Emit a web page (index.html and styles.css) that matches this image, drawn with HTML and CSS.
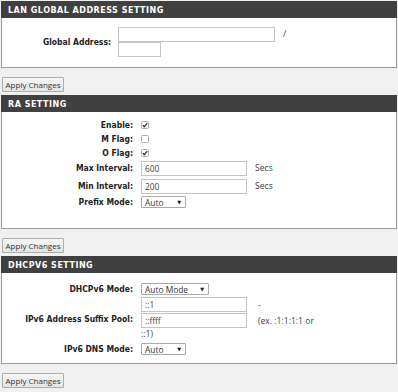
FILE: index.html
```html
<!DOCTYPE html>
<html lang="en">
<head>
<meta charset="utf-8">
<title>IPv6 LAN Settings</title>
<link rel="stylesheet" href="styles.css">
</head>
<body>
<div class="page">
  <section class="panel">
    <div class="panel-head">LAN GLOBAL ADDRESS SETTING</div>
    <div class="panel-body body-lan">
      <div class="row row-lan">
        <div class="label">Global Address:</div>
        <div class="value stack">
          <div class="line"><input class="field w-addr" type="text" value=""><span class="note note-slash">/</span></div>
          <div class="line"><input class="field w-prefix" type="text" value=""></div>
        </div>
      </div>
    </div>
  </section>
  <div class="actions"><button class="btn" type="button">Apply Changes</button></div>

  <section class="panel">
    <div class="panel-head">RA SETTING</div>
    <div class="panel-body body-ra">
      <div class="row row-cb h14">
        <div class="label">Enable:</div>
        <div class="value"><svg class="cb" width="8" height="8" viewBox="0 0 8 8"><rect x="0.5" y="0.5" width="7" height="7" rx="1" fill="#fff" stroke="#b0b0b0"/><path d="M1.8 4.2 L3.3 5.7 L6.3 2.2" fill="none" stroke="#333" stroke-width="1.3"/></svg></div>
      </div>
      <div class="row row-cb h14">
        <div class="label">M Flag:</div>
        <div class="value"><svg class="cb" width="8" height="8" viewBox="0 0 8 8"><rect x="0.5" y="0.5" width="7" height="7" rx="1" fill="#fff" stroke="#b0b0b0"/></svg></div>
      </div>
      <div class="row row-cb h13">
        <div class="label">O Flag:</div>
        <div class="value"><svg class="cb" width="8" height="8" viewBox="0 0 8 8"><rect x="0.5" y="0.5" width="7" height="7" rx="1" fill="#fff" stroke="#b0b0b0"/><path d="M1.8 4.2 L3.3 5.7 L6.3 2.2" fill="none" stroke="#333" stroke-width="1.3"/></svg></div>
      </div>
      <div class="row h18">
        <div class="label">Max Interval:</div>
        <div class="value"><input class="field w-std" type="text" value="600"><span class="note note-secs">Secs</span></div>
      </div>
      <div class="row h18">
        <div class="label">Min Interval:</div>
        <div class="value"><input class="field w-std" type="text" value="200"><span class="note note-secs">Secs</span></div>
      </div>
      <div class="row h14">
        <div class="label">Prefix Mode:</div>
        <div class="value"><div class="select w-sel-sm"><span>Auto</span><span class="arrow">&#9660;</span></div></div>
      </div>
    </div>
  </section>
  <div class="actions"><button class="btn" type="button">Apply Changes</button></div>

  <section class="panel">
    <div class="panel-head">DHCPV6 SETTING</div>
    <div class="panel-body body-dhcp">
      <div class="row h16">
        <div class="label">DHCPv6 Mode:</div>
        <div class="value"><div class="select w-sel-lg"><span>Auto Mode</span><span class="arrow">&#9660;</span></div></div>
      </div>
      <div class="row">
        <div class="label">IPv6 Address Suffix Pool:</div>
        <div class="value stack">
          <div class="line"><input class="field w-std" type="text" value="::1"><span class="note note-pool">-</span></div>
          <div class="line line-gap"><input class="field w-std" type="text" value="::ffff"><span class="note note-pool">(ex. :1:1:1:1 or</span></div>
          <div class="line note-line">::1)</div>
        </div>
      </div>
      <div class="row h16">
        <div class="label">IPv6 DNS Mode:</div>
        <div class="value"><div class="select w-sel-sm"><span>Auto</span><span class="arrow">&#9660;</span></div></div>
      </div>
    </div>
  </section>
  <div class="actions"><button class="btn" type="button">Apply Changes</button></div>
</div>
</body>
</html>
```

FILE: styles.css
```css
* { box-sizing: border-box; }

html, body {
  margin: 0;
  padding: 0;
  background: #f0f0f0;
}

.page {
  padding: 1px 1px 0 1px;
  width: 398px;
}

.panel {
  background: #fff;
  border: 1px solid #9a9a9a;
  border-top: 0;
}

.panel-head {
  height: 17px;
  background: #404040;
  color: #fff;
  font-family: "DejaVu Sans", sans-serif;
  font-weight: bold;
  font-size: 8px;
  letter-spacing: 0.5px;
  line-height: 17px;
  padding-left: 7px;
  margin: 0 -1px;
  padding-top: 1px;
}

.panel-body {
  display: flex;
  flex-direction: column;
}

.body-lan { padding: 9px 0 10px 0; }
.body-ra { padding: 6px 0 19px 0; }
.body-dhcp { padding: 8px 0 6px 0; }

.row {
  display: grid;
  grid-template-columns: 131px 1fr;
  column-gap: 8px;
  align-items: center;
}

.row-lan {
  grid-template-columns: 109px 1fr;
  column-gap: 7px;
}

.h13 { height: 13px; }
.h14 { height: 14px; }
.h16 { height: 16px; }
.h18 { height: 18px; }

.label {
  text-align: right;
  font-family: "DejaVu Sans Condensed", "DejaVu Sans", sans-serif;
  font-stretch: condensed;
  font-weight: bold;
  font-size: 8.5px;
  color: #222;
  white-space: nowrap;
}

.value {
  display: flex;
  align-items: center;
  font-family: "Open Sans", sans-serif;
  font-size: 8.6px;
  color: #333;
}

.stack {
  flex-direction: column;
  align-items: flex-start;
}

.line {
  display: flex;
  align-items: center;
}

.line-gap { margin-top: 1px; }

.note-line {
  height: 13px;
  line-height: 13px;
  color: #444;
}

.field {
  height: 15px;
  border: 1px solid #c4c4c4;
  background: #fff;
  font-family: "Open Sans", sans-serif;
  font-size: 8.4px;
  color: #444;
  padding: 0 3px;
  margin: 0;
  outline: none;
}

.w-addr { width: 157px; }
.w-prefix { width: 43px; }
.w-std { width: 106px; }

.note { color: #444; }
.note-slash { margin-left: 8px; margin-top: -2px; }
.note-secs { margin-left: 8px; }
.note-pool { margin-left: 11px; }

.cb { display: block; }

.select {
  display: flex;
  justify-content: space-between;
  align-items: center;
  height: 12px;
  border: 1px solid #a9a9a9;
  border-radius: 1px;
  background: #fff;
  padding: 0 4px 0 3px;
  font-family: "Open Sans", sans-serif;
  font-size: 8.4px;
  color: #333;
}

.w-sel-sm { width: 45px; }
.w-sel-lg { width: 68px; }

.arrow {
  font-size: 5px;
  color: #111;
  font-family: "DejaVu Sans", sans-serif;
}

.actions {
  padding: 9px 0 3px 1px;
}

.btn {
  display: block;
  width: 62px;
  height: 15px;
  padding: 0;
  margin: 0;
  border: 1px solid #adadad;
  border-radius: 1px;
  background: linear-gradient(#f6f6f6, #e4e4e4);
  font-family: "Open Sans", sans-serif;
  font-size: 8px;
  color: #333;
  line-height: 13px;
}
```
